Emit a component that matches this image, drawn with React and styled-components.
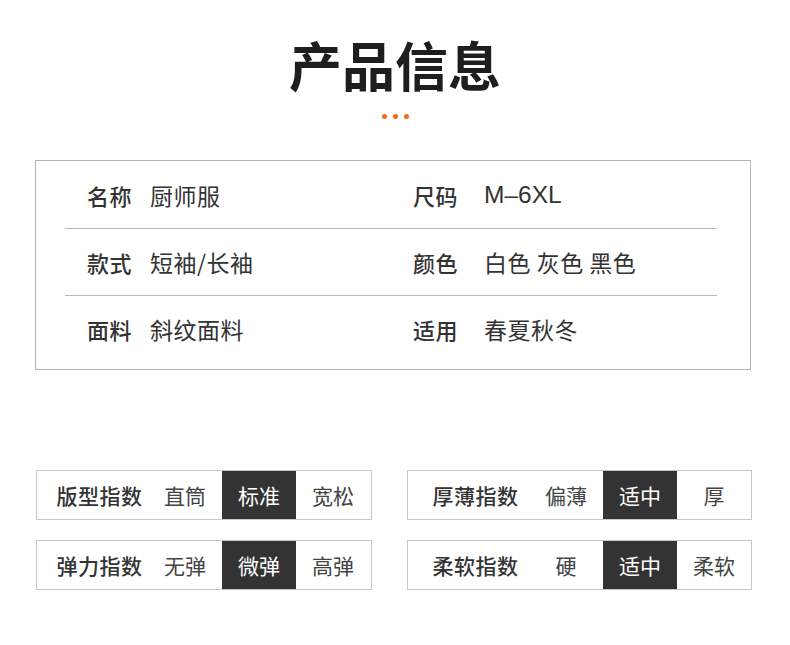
import React from "react";
import styled, { createGlobalStyle } from "styled-components";

const Global = createGlobalStyle`
  html, body { margin: 0; padding: 0; background: #fff; }
  body { font-family: "Noto Sans CJK SC", "Noto Sans", sans-serif; color: #333; }
`;

const Page = styled.div`
  width: 790px;
  height: 645px;
  background: #fff;
  display: flex;
  flex-direction: column;
  overflow: hidden;
`;

const Title = styled.h1`
  margin: 30px 0 0;
  text-align: center;
  font-size: 53px;
  line-height: 68px;
  font-weight: 700;
  color: #1e1e1e;
  letter-spacing: 0;
`;

const Dots = styled.div`
  display: flex;
  justify-content: center;
  gap: 6px;
  margin-top: 16px;
`;

const Dot = styled.span`
  width: 5px;
  height: 5px;
  border-radius: 50%;
  background: #f26a1b;
`;

const Table = styled.div`
  margin: 41px 0 0 35px;
  width: 716px;
  height: 210px;
  box-sizing: border-box;
  border: 1px solid #b3b3b3;
  padding: 1px 33px 0 29px;
  display: flex;
  flex-direction: column;
`;

const Row = styled.div`
  height: 66px;
  display: grid;
  grid-template-columns: 326px 1fr;
  padding-left: 22px;
  align-items: center;
  border-bottom: ${(p) => (p.$last ? "none" : "1px solid #b8b8b8")};
`;

const Cell = styled.div`
  display: flex;
  align-items: center;
`;

const Label = styled.span`
  font-size: 22px;
  font-weight: 500;
  color: #333;
  width: ${(p) => p.$w}px;
  flex: none;
  letter-spacing: 0.5px;
`;

const Value = styled.span`
  font-size: ${(p) => (p.$latin ? "24.5px" : "23px")};
  font-weight: 400;
  color: #333;
  font-family: ${(p) =>
    p.$latin
      ? `"Liberation Sans", "Noto Sans CJK SC", sans-serif`
      : `"Noto Sans CJK SC", sans-serif`};
  letter-spacing: ${(p) => (p.$latin ? "0" : "0.5px")};
`;

const Indexes = styled.div`
  margin: 100px 0 0 36px;
  display: grid;
  grid-template-columns: 336px 345px;
  column-gap: 35px;
  row-gap: 20px;
`;

const Box = styled.div`
  height: 50px;
  box-sizing: border-box;
  border: 1px solid #c8c8c8;
  display: grid;
  grid-template-columns: ${(p) => p.$labelW}px repeat(3, 74px);
`;

const BoxLabel = styled.div`
  display: flex;
  align-items: center;
  justify-content: center;
  padding-left: 14px;
  font-size: 21px;
  font-weight: 500;
  color: #333;
  letter-spacing: 0.5px;
`;

const Option = styled.div`
  display: flex;
  align-items: center;
  justify-content: center;
  font-size: 21px;
  color: ${(p) => (p.$on ? "#fff" : "#444")};
  background: ${(p) => (p.$on ? "#333" : "transparent")};
`;

const info = [
  [
    { k: "名称", v: "厨师服" },
    { k: "尺码", v: "M–6XL", latin: true },
  ],
  [
    { k: "款式", v: "短袖/长袖" },
    { k: "颜色", v: "白色 灰色 黑色" },
  ],
  [
    { k: "面料", v: "斜纹面料" },
    { k: "适用", v: "春夏秋冬" },
  ],
];

const indexes = [
  { label: "版型指数", w: 111, opts: ["直筒", "标准", "宽松"], on: 1 },
  { label: "厚薄指数", w: 121, opts: ["偏薄", "适中", "厚"], on: 1 },
  { label: "弹力指数", w: 111, opts: ["无弹", "微弹", "高弹"], on: 1 },
  { label: "柔软指数", w: 121, opts: ["硬", "适中", "柔软"], on: 1 },
];

export default function App() {
  return (
    <Page>
      <Global />
      <Title>产品信息</Title>
      <Dots>
        <Dot />
        <Dot />
        <Dot />
      </Dots>
      <Table>
        {info.map((row, i) => (
          <Row key={i} $last={i === info.length - 1}>
            {row.map((c, j) => (
              <Cell key={j}>
                <Label $w={j === 0 ? 63 : 71}>{c.k}</Label>
                <Value $latin={c.latin}>{c.v}</Value>
              </Cell>
            ))}
          </Row>
        ))}
      </Table>
      <Indexes>
        {indexes.map((b) => (
          <Box key={b.label} $labelW={b.w}>
            <BoxLabel>{b.label}</BoxLabel>
            {b.opts.map((o, i) => (
              <Option key={o} $on={i === b.on}>
                {o}
              </Option>
            ))}
          </Box>
        ))}
      </Indexes>
    </Page>
  );
}
